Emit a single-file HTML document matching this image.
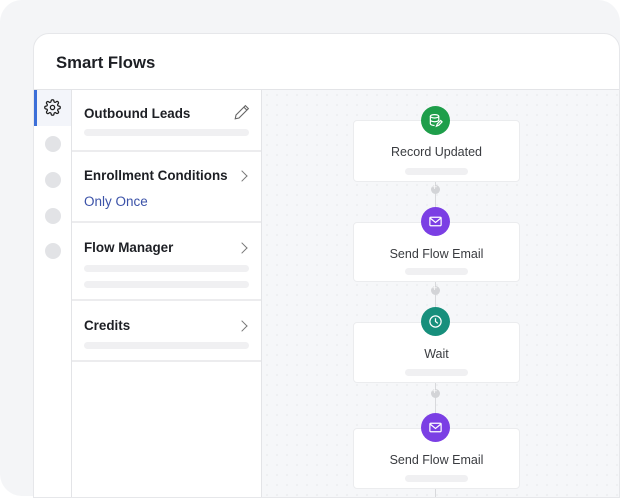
<!DOCTYPE html>
<html><head><style>
*{box-sizing:border-box;margin:0;padding:0}
body{width:620px;height:498px;background:#fff;font-family:"Liberation Sans",sans-serif;position:relative;overflow:hidden}
.outer{position:absolute;left:0;top:0;width:620px;height:496px;background:#f4f5f7;border-radius:22px}
.card{position:absolute;left:33px;top:33px;width:587px;height:465px;background:#fff;border:1px solid #e6e7ea;border-radius:16px 16px 0 0;overflow:hidden}
.hdr{position:absolute;left:0;top:0;width:100%;height:56px;border-bottom:1px solid #e3e4e7}
.hdr h1{position:absolute;left:22px;top:19px;font-size:16.7px;font-weight:bold;color:#1d1f24}
.rail{position:absolute;left:0;top:56px;width:38px;height:420px;border-right:1px solid #e3e4e7}
.rail .act{position:absolute;left:0;top:0;width:37px;height:36px;background:#f3f5fa;border-left:3px solid #3c6fd8}
.dot{position:absolute;left:11px;width:16px;height:16px;border-radius:50%;background:#e2e3e6}
.panel{position:absolute;left:38px;top:56px;width:190px;height:420px;border-right:1px solid #e3e4e7}
.sec{position:absolute;left:0;width:189px;border-bottom:2px solid #ececee}
.sec h2{position:absolute;left:12px;font-size:13.4px;font-weight:bold;color:#1d1f24}
.bar{position:absolute;left:12px;width:165px;height:7px;border-radius:4px;background:#f0f0f2}
.chev{position:absolute;left:166px;width:8px;height:8px;border-right:1.2px solid #777;border-top:1.2px solid #777;transform:rotate(45deg)}
.canvas{position:absolute;left:228px;top:56px;width:360px;height:420px;background-color:#f6f7f9;background-image:radial-gradient(#eaebee 0.7px,transparent 1px);background-size:10px 10px}
.node{position:absolute;left:91px;width:167px;background:#fff;border:1px solid #ebecee;border-radius:4px;text-align:center;font-size:12.5px;color:#3a3c40}
.node .t{position:absolute;left:0;width:100%}
.node .b{position:absolute;left:51px;width:63px;height:7px;border-radius:4px;background:#f0f0f2}
.ic{position:absolute;left:159px;width:29px;height:29px;border-radius:50%}
.ic svg{position:absolute;left:7px;top:7px}
.line{position:absolute;left:173px;width:1px;background:#d8d9dc}
.plus{position:absolute;left:169px;width:9px;height:9px;border-radius:50%;background:#d3d4d7}
.plus:after{content:"+";position:absolute;left:1px;top:-3px;font-size:9px;color:#fff}
</style></head><body>
<div class="outer"></div>
<div class="card">
 <div class="hdr"><h1>Smart Flows</h1></div>
 <div class="rail">
  <div class="act"><svg style="position:absolute;left:7px;top:9px" width="17" height="17" viewBox="0 0 24 24" fill="none" stroke="#222" stroke-width="1.8"><circle cx="12" cy="12" r="3"/><path d="M19.4 15a1.7 1.7 0 0 0 .3 1.8l.1.1a2 2 0 1 1-2.8 2.8l-.1-.1a1.7 1.7 0 0 0-1.8-.3 1.7 1.7 0 0 0-1 1.5V21a2 2 0 1 1-4 0v-.1a1.7 1.7 0 0 0-1.100-1.5 1.7 1.7 0 0 0-1.8.3l-.1.1a2 2 0 1 1-2.8-2.8l.1-.1a1.7 1.7 0 0 0 .3-1.8 1.7 1.7 0 0 0-1.5-1H3a2 2 0 1 1 0-4h.1a1.7 1.7 0 0 0 1.5-1.1 1.7 1.7 0 0 0-.3-1.8l-.1-.1a2 2 0 1 1 2.8-2.8l.1.1a1.7 1.7 0 0 0 1.8.3H9a1.7 1.7 0 0 0 1-1.5V3a2 2 0 1 1 4 0v.1a1.7 1.7 0 0 0 1 1.5 1.7 1.7 0 0 0 1.8-.3l.1-.1a2 2 0 1 1 2.8 2.8l-.1.1a1.7 1.7 0 0 0-.3 1.8V9a1.7 1.7 0 0 0 1.5 1H21a2 2 0 1 1 0 4h-.1a1.7 1.7 0 0 0-1.5 1z"/></svg></div>
  <div class="dot" style="top:46px"></div>
  <div class="dot" style="top:82px"></div>
  <div class="dot" style="top:118px"></div>
  <div class="dot" style="top:153px"></div>
 </div>
 <div class="panel">
  <div class="sec" style="top:0;height:62px"><h2 style="top:16px">Outbound Leads</h2>
   <svg style="position:absolute;left:161px;top:13px" width="18" height="18" viewBox="0 0 24 24" fill="none" stroke="#666" stroke-width="1.5"><path d="M16.5 3.5l4 4L8 20l-5 1 1-5z M14.5 5.5l4 4"/></svg>
   <div class="bar" style="top:39px"></div></div>
  <div class="sec" style="top:62px;height:71px"><h2 style="top:16px">Enrollment Conditions</h2><div class="chev" style="top:20px"></div>
   <div style="position:absolute;left:12px;top:42px;font-size:13.5px;color:#3b52a8">Only Once</div></div>
  <div class="sec" style="top:133px;height:78px"><h2 style="top:17px">Flow Manager</h2><div class="chev" style="top:21px"></div>
   <div class="bar" style="top:42px"></div><div class="bar" style="top:58px"></div></div>
  <div class="sec" style="top:211px;height:61px"><h2 style="top:17px">Credits</h2><div class="chev" style="top:21px"></div>
   <div class="bar" style="top:41px"></div></div>
 </div>
 <div class="canvas">
  <div class="line" style="top:92px;height:40px"></div>
  <div class="line" style="top:192px;height:40px"></div>
  <div class="line" style="top:293px;height:40px"></div>
  <div class="line" style="top:399px;height:30px"></div>
  <div class="plus" style="top:95px"></div>
  <div class="plus" style="top:196px"></div>
  <div class="plus" style="top:299px"></div>
  <div class="node" style="top:30px;height:62px"><div class="t" style="top:24px">Record Updated</div><div class="b" style="top:47px"></div></div>
  <div class="node" style="top:132px;height:60px"><div class="t" style="top:24px">Send Flow Email</div><div class="b" style="top:45px"></div></div>
  <div class="node" style="top:232px;height:61px"><div class="t" style="top:24px">Wait</div><div class="b" style="top:46px"></div></div>
  <div class="node" style="top:338px;height:61px"><div class="t" style="top:24px">Send Flow Email</div><div class="b" style="top:46px"></div></div>
  <div class="ic" style="top:16px;background:#1e9e4a"><svg width="15" height="15" viewBox="0 0 16 16" fill="none" stroke="#fff" stroke-width="1.3"><ellipse cx="7" cy="3.5" rx="4.5" ry="1.8"/><path d="M2.5 3.5v8c0 1 2 1.8 4.5 1.8M11.5 3.5v4M2.5 7.5c0 1 2 1.8 4.5 1.8s4.5-.8 4.5-1.8M9 14l1-2.5 3.5-3.5 1.5 1.5-3.5 3.5z"/></svg></div>
  <div class="ic" style="top:117px;background:#7b3fe4"><svg width="15" height="15" viewBox="0 0 16 16" fill="none" stroke="#fff" stroke-width="1.3"><rect x="2" y="3.5" width="12" height="9" rx="1"/><path d="M2.5 4.5L8 9l5.5-4.5"/></svg></div>
  <div class="ic" style="top:217px;background:#178f7c"><svg width="15" height="15" viewBox="0 0 16 16" fill="none" stroke="#fff" stroke-width="1.3"><circle cx="8" cy="8" r="6"/><path d="M8 4.5V8l2.5 2"/></svg></div>
  <div class="ic" style="top:323px;background:#7b3fe4"><svg width="15" height="15" viewBox="0 0 16 16" fill="none" stroke="#fff" stroke-width="1.3"><rect x="2" y="3.5" width="12" height="9" rx="1"/><path d="M2.5 4.5L8 9l5.5-4.5"/></svg></div>
 </div>
</div>
</body></html>
